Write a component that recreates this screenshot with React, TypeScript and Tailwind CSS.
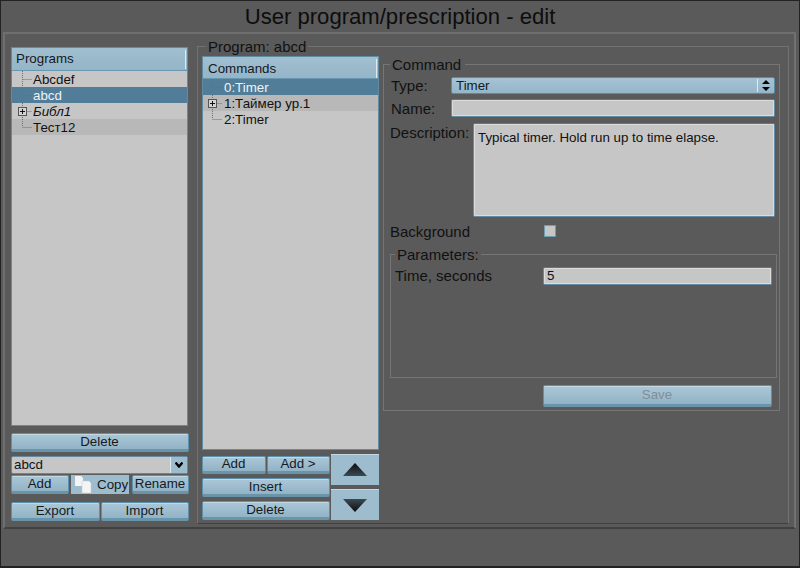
import React from "react";

const btn =
  "flex items-center justify-center rounded-[2px] border border-[#5d90ab] border-b-[3px] border-b-[#6a94aa] bg-gradient-to-b from-[#aac7d7] to-[#92b3c6] pr-[1px] text-[13.33px] leading-none text-[#151a1e] shadow-[inset_0_1px_0_#c2d8e3]";

function Btn({ className, children }: { className: string; children: React.ReactNode }) {
  return <div className={`${btn} ${className}`}>{children}</div>;
}

function Gutter({ kind, last, narrow }: { kind: "leaf" | "plus"; last?: boolean; narrow?: boolean }) {
  return (
    <svg width="20" height="16" viewBox={`${narrow ? -1 : 0} 0 20 16`} className="shrink-0">
      <path
        d={`M9.5 0V${last ? 8 : 16}M9.5 8.5H19`}
        stroke="#6f6f6f"
        strokeWidth="1"
        strokeDasharray="1 1"
        fill="none"
      />
      {kind === "plus" && (
        <g>
          <rect x="5.5" y="4.5" width="8" height="8" fill="#d4d4d4" stroke="#555" />
          <path d="M7 8.5H12M9.5 6V11" stroke="#111" />
        </g>
      )}
    </svg>
  );
}

function Row({
  label,
  kind = "leaf",
  last,
  sel,
  alt,
  italic,
  narrow,
}: {
  label: string;
  kind?: "leaf" | "plus";
  last?: boolean;
  sel?: boolean;
  alt?: boolean;
  italic?: boolean;
  narrow?: boolean;
}) {
  return (
    <div
      className={`flex h-[16px] items-center text-[13.33px] leading-none ${
        sel ? "bg-[#527d99] text-[#eef3f6]" : alt ? "bg-[#b8b8b8] text-[#111]" : "text-[#111]"
      } ${italic ? "italic" : ""}`}
    >
      <Gutter kind={kind} last={last} narrow={narrow} />
      <span className="ml-[1px] pt-[1px]">{label}</span>
    </div>
  );
}

function Tree({
  title,
  className,
  headClass,
  children,
}: {
  title: string;
  className: string;
  headClass: string;
  children: React.ReactNode;
}) {
  return (
    <div className={`border border-[#628aa0] bg-[#c6c6c6] ${className}`}>
      <div
        className={`flex items-center border-b border-[#6a97b0] bg-gradient-to-b from-[#a0bfd0] to-[#95b5c8] pr-[1px] text-[13.33px] text-[#15191c] ${headClass}`}
      >
        <span className="flex-1">{title}</span>
        <span className="h-[19px] w-[1px] bg-[#dfe9ee]" />
      </div>
      {children}
    </div>
  );
}

function Field({ className, children }: { className: string; children?: React.ReactNode }) {
  return (
    <div
      className={`rounded-[2px] border border-[#628aa0] border-t-[#4f7c95] bg-[#c6c6c6] text-[13.33px] text-[#111] shadow-[inset_0_0_0_1px_#dcdcdc] ${className}`}
    >
      {children}
    </div>
  );
}

function Triangle({ up }: { up?: boolean }) {
  const id = up ? "tu" : "td";
  return (
    <svg width="26" height="14" viewBox="0 0 26 14">
      <defs>
        <linearGradient id={id} x1="0" y1={up ? "0" : "1"} x2="0" y2={up ? "1" : "0"}>
          <stop offset="0" stopColor="#0c0c0c" />
          <stop offset="1" stopColor="#3c4a52" />
        </linearGradient>
      </defs>
      <path d={up ? "M13 0L25 13H1Z" : "M1 1H25L13 14Z"} fill={`url(#${id})`} />
    </svg>
  );
}

export default function App() {
  return (
    <div
      className="flex h-[568px] w-[800px] flex-col overflow-hidden border border-[#222] border-b-[2px] bg-[#5a5a5a] text-[#111]"
      style={{ fontFamily: '"Liberation Sans", Arial, sans-serif' }}
    >
      <div className="h-[31px] pt-[3px] text-center text-[22.1px] leading-[26px] text-[#0d0d0d]">
        User program/prescription - edit
      </div>
      <div className="ml-[2px] mr-[3px] flex h-[497px] border-2 border-[#6f6f6f] border-b-[#414141] border-r-[#717171] pl-[6px]">
        {/* Left column */}
        <div className="flex w-[178px] shrink-0 flex-col pt-[13px]">
          <Tree title="Programs" headClass="h-[23px] pl-[4px]" className="h-[379px] w-[177px]">
            <Row narrow label="Abcdef" />
            <Row narrow label="abcd" sel />
            <Row narrow label="Библ1" kind="plus" italic />
            <Row narrow label="Тест12" alt last />
          </Tree>
          <Btn className="mt-[7px] h-[19px] w-[178px]">Delete</Btn>
          <div className="mt-[4px] flex h-[18px] w-[177px] rounded-[2px] border border-[#628aa0] bg-[#c6c6c6] text-[13.33px]">
            <span className="flex-1 pl-[2px] leading-[16px]">abcd</span>
            <span className="flex w-[17px] items-center justify-center border-l border-[#dfe9ee] bg-[#9dbccd]">
              <svg width="8" height="6" viewBox="0 0 8 6">
                <path d="M0.5 0.5L4 4.5L7.5 0.5" stroke="#000" strokeWidth="2.4" fill="none" />
              </svg>
            </span>
          </div>
          <div className="mt-[1px] flex h-[19px] w-[178px] items-stretch">
            <Btn className="w-[58px]">Add</Btn>
            <div className="ml-[2px] flex w-[58px] items-center bg-[#9dbccd] text-[13.33px] leading-none text-[#151a1e]">
              <svg width="20" height="17" viewBox="0 0 20 17" className="ml-[3px] shrink-0">
                <path d="M1 0H7L9 2V10H1Z" fill="#f4f4f4" />
                <path d="M8 5H15L17 7V17H8Z" fill="#f4f4f4" stroke="#c0ccd3" strokeWidth="0.5" />
              </svg>
              <span className="ml-[3px]">Copy</span>
            </div>
            <Btn className="ml-[3px] w-[57px]">Rename</Btn>
          </div>
          <div className="mt-[8px] flex h-[19px] w-[178px] gap-[1px]">
            <Btn className="w-[89px]">Export</Btn>
            <Btn className="w-[88px]">Import</Btn>
          </div>
        </div>

        {/* Program group */}
        <fieldset className="ml-[8px] mr-[5px] mt-[4px] flex h-[486px] w-[591px] shrink-0 border border-[#717171] border-b-[#414141] pl-[4px]">
          <legend className="ml-[4px] px-[2px] text-[15px] leading-[17px]">Program: abcd</legend>
          <div className="flex w-[586px]">
            <div className="w-[178px] shrink-0 pt-[1px]">
              <Tree title="Commands" headClass="h-[22px] pt-[2px] pl-[5px]" className="h-[394px] w-[177px]">
                <Row label="0:Timer" sel />
                <Row label="1:Таймер ур.1" kind="plus" alt />
                <Row label="2:Timer" last />
              </Tree>
              <div className="mt-[4px] flex w-[178px]">
                <div className="flex w-[128px] shrink-0 flex-col">
                  <div className="mt-[2px] flex h-[18px] gap-[1px]">
                    <Btn className="w-[64px]">Add</Btn>
                    <Btn className="w-[63px]">Add &gt;</Btn>
                  </div>
                  <Btn className="mt-[4px] h-[19px] w-[128px]">Insert</Btn>
                  <Btn className="mt-[4px] h-[19px] w-[128px]">Delete</Btn>
                </div>
                <div className="ml-[1px] flex w-[48px] flex-col gap-[4px]">
                  <div className="flex h-[31px] items-center justify-center border-t border-[#c2d8e3] bg-[#9dbccd]">
                    <Triangle up />
                  </div>
                  <div className="flex h-[31px] items-center justify-center border-t border-[#c2d8e3] bg-[#9dbccd]">
                    <Triangle />
                  </div>
                </div>
              </div>
            </div>

            {/* Command group */}
            <fieldset className="ml-[3px] mt-[1px] h-[355px] w-[395px] shrink-0 self-start border border-[#757575] pl-[6px] pr-[2px]">
              <legend className="pl-[2px] pr-[4px] text-[15px] leading-[17px]">Command</legend>
              <div className="mt-[4px] flex h-[17px] items-center">
                <span className="w-[61px] pl-[1px] pt-[1px] text-[15px]">Type:</span>
                <div className="flex h-[17px] w-[324px] items-center rounded-[2px] border border-[#5a8ba6] bg-gradient-to-b from-[#a5c3d4] to-[#95b6c9] pl-[4px] text-[13.33px] text-[#151a1e]">
                  <span className="flex-1 leading-none">Timer</span>
                  <span className="flex h-[13px] w-[17px] items-center justify-center border-l border-[#dfe9ee]">
                    <svg width="8" height="11" viewBox="0 0 8 11">
                      <path d="M4 0L8 4H0ZM0 7H8L4 11Z" fill="#000" />
                    </svg>
                  </span>
                </div>
              </div>
              <div className="mt-[5px] flex h-[18px] items-center">
                <span className="w-[61px] pl-[1px] pt-[2px] text-[15px]">Name:</span>
                <Field className="h-[18px] w-[324px]" />
              </div>
              <div className="mt-[6px] flex">
                <span className="w-[83px] pt-[1px] text-[15px] leading-[17px]">Description:</span>
                <Field className="h-[94px] w-[302px] px-[4px] pt-[6px] leading-[15px]">
                  Typical timer. Hold run up to time elapse.
                </Field>
              </div>
              <div className="mt-[7px] flex h-[17px] items-center">
                <span className="w-[154px] text-[15px]">Background</span>
                <div className="-mt-[3px] h-[12px] w-[12px] border border-[#6f9bb3] bg-[#c6c6c6]" />
              </div>
              <fieldset className="mt-[5px] h-[132px] w-[387px] border border-[#757575] pl-[4px]">
                <legend className="px-[2px] text-[15px] leading-[17px]">Parameters:</legend>
                <div className="mt-[4px] flex h-[18px] items-center">
                  <span className="w-[148px] text-[15px]">Time, seconds</span>
                  <Field className="h-[18px] w-[229px] pl-[3px] leading-[16px]">5</Field>
                </div>
              </fieldset>
              <div className="mt-[7px] pl-[153px]">
                <Btn className="h-[22px] w-[229px] !text-[#7f8f99]">Save</Btn>
              </div>
            </fieldset>
          </div>
        </fieldset>
      </div>
    </div>
  );
}
